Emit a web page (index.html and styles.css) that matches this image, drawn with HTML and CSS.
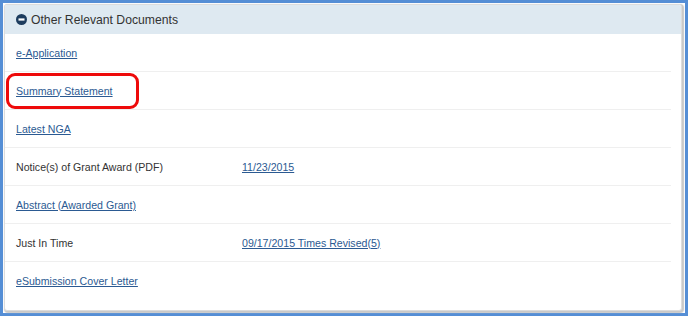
FILE: index.html
```html
<!DOCTYPE html>
<html lang="en">
<head>
  <meta charset="UTF-8">
  <title>Other Relevant Documents</title>
  <link rel="stylesheet" href="styles.css">
</head>
<body>

  <div class="frame">
    <div class="panel">
      <div class="panel-heading">
        <svg class="toggle" width="11" height="11" viewBox="0 0 11 11">
          <circle cx="5.5" cy="5.5" r="5.5" fill="#1d3c5e"/>
          <rect x="2.5" y="4.4" width="6" height="2.2" fill="#fff"/>
        </svg>
        <span>Other Relevant Documents</span>
      </div>

      <div class="docs">
        <div class="row"><a href="#">e-Application</a></div>
        <div class="row">
          <a href="#">Summary Statement</a>
          <span class="highlight"></span>
        </div>
        <div class="row"><a href="#">Latest NGA</a></div>
        <div class="row">
          <span>Notice(s) of Grant Award (PDF)</span>
          <a href="#">11/23/2015</a>
        </div>
        <div class="row"><a href="#">Abstract (Awarded Grant)</a></div>
        <div class="row">
          <span>Just In Time</span>
          <a href="#">09/17/2015 Times Revised(5)</a>
        </div>
        <div class="row last"><a href="#">eSubmission Cover Letter</a></div>
      </div>
    </div>
  </div>

</body>
</html>
```

FILE: styles.css
```css
html, body {
  margin: 0;
  height: 100%;
}

body {
  font-family: "Liberation Sans", Arial, sans-serif;
  background-color: #558ed5;
  padding: 3px;
  box-sizing: border-box;
  color: #333;
}

.frame {
  background: #fff;
  height: 310px;
  padding: 1px 3px 0 1px;
  box-sizing: border-box;
}

.panel {
  height: 305px;
  border: 1px solid #dcdcdc;
  border-radius: 3px;
  box-shadow: 1px 1px 1px 1px #c9c9c9;
  background: #fff;
  overflow: hidden;
}

.panel-heading {
  display: flex;
  align-items: center;
  gap: 4px;
  height: 29px;
  padding-left: 11px;
  background-color: #dee9f1;
  font-size: 12.2px;
  color: #333;
}

.toggle {
  display: block;
}

.docs {
  margin-right: 10px;
}

.row {
  position: relative;
  display: grid;
  grid-template-columns: 226px 1fr;
  align-items: center;
  height: 37px;
  padding-left: 11px;
  border-bottom: 1px solid #efefef;
  font-size: 10.6px;
}

.row.last {
  border-bottom: none;
}

a {
  color: #2b5a92;
  text-decoration: underline;
}

.highlight {
  position: absolute;
  left: 1px;
  top: 1px;
  width: 127px;
  height: 30px;
  border: 3px solid #ee0a0a;
  border-radius: 9px;
}
```
